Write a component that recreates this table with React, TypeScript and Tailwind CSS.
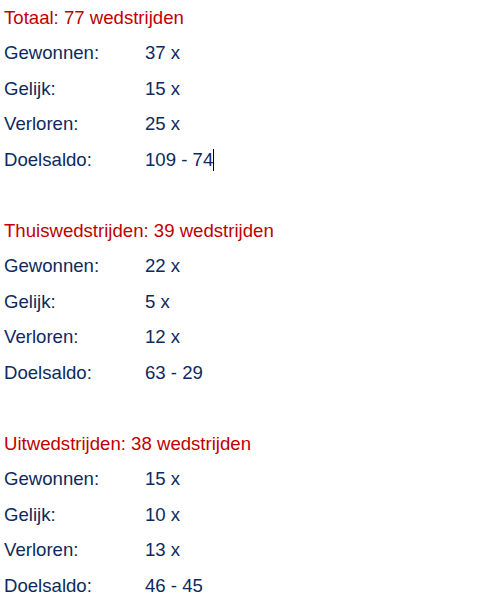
import React from "react";

type Row = { label: string; value: string; caret?: boolean };
type Section = { title: string; rows: Row[] };

const sections: Section[] = [
  {
    title: "Totaal: 77 wedstrijden",
    rows: [
      { label: "Gewonnen:", value: "37 x" },
      { label: "Gelijk:", value: "15 x" },
      { label: "Verloren:", value: "25 x" },
      { label: "Doelsaldo:", value: "109 - 74", caret: true },
    ],
  },
  {
    title: "Thuiswedstrijden: 39 wedstrijden",
    rows: [
      { label: "Gewonnen:", value: "22 x" },
      { label: "Gelijk:", value: "5 x" },
      { label: "Verloren:", value: "12 x" },
      { label: "Doelsaldo:", value: "63 - 29" },
    ],
  },
  {
    title: "Uitwedstrijden: 38 wedstrijden",
    rows: [
      { label: "Gewonnen:", value: "15 x" },
      { label: "Gelijk:", value: "10 x" },
      { label: "Verloren:", value: "13 x" },
      { label: "Doelsaldo:", value: "46 - 45" },
    ],
  },
];

export default function App() {
  return (
    <div className="h-[599px] overflow-hidden bg-white px-1 font-['Liberation_Sans',Arial,sans-serif] text-[18.6px]">
      {sections.map((section) => (
        <div key={section.title} className="mb-[35.5px] last:mb-0">
          <div className="flex h-[35.5px] items-center text-[#c00000]">
            {section.title}
          </div>
          {section.rows.map((row) => (
            <div
              key={row.label}
              className="flex h-[35.5px] items-center text-[#0c2a5e]"
            >
              <span className="w-[141px] shrink-0">{row.label}</span>
              <span className="flex items-center">
                {row.value}
                {row.caret && (
                  <span className="inline-block h-[22px] w-px bg-black" />
                )}
              </span>
            </div>
          ))}
        </div>
      ))}
    </div>
  );
}
